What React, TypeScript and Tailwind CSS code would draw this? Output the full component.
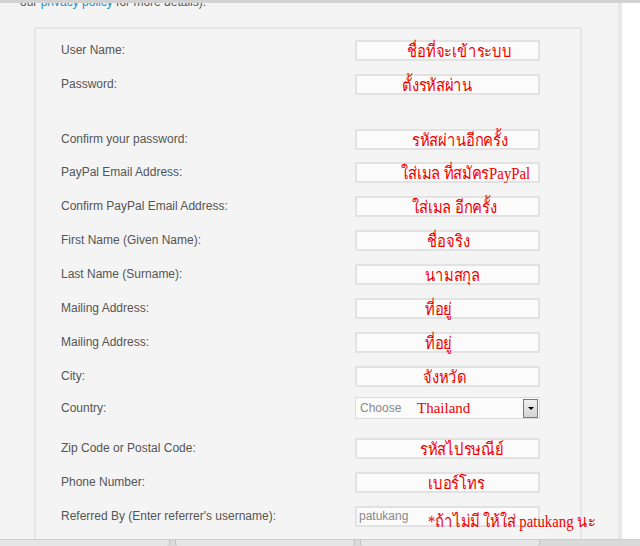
import React from 'react'

type Row = {
  label: string
  note?: string
  left?: number
  kind?: 'input' | 'select' | 'ref'
  h: number
  gapBefore?: number
}

const rows: Row[] = [
  { label: 'User Name:', note: 'ชื่อที่จะเข้าระบบ', left: 52, h: 34 },
  { label: 'Password:', note: 'ตั้งรหัสผ่าน', left: 47, h: 34 },
  { label: 'Confirm your password:', note: 'รหัสผ่านอีกครั้ง', left: 57, h: 32, gapBefore: 22 },
  { label: 'PayPal Email Address:', note: 'ใส่เมล ที่สมัครPayPal', left: 46, h: 34 },
  { label: 'Confirm PayPal Email Address:', note: 'ใส่เมล อีกครั้ง', left: 57, h: 34 },
  { label: 'First Name (Given Name):', note: 'ชื่อจริง', left: 72, h: 34 },
  { label: 'Last Name (Surname):', note: 'นามสกุล', left: 70, h: 34 },
  { label: 'Mailing Address:', note: 'ที่อยู่', left: 70, h: 34 },
  { label: 'Mailing Address:', note: 'ที่อยู่', left: 70, h: 34 },
  { label: 'City:', note: 'จังหวัด', left: 68, h: 34 },
  { label: 'Country:', kind: 'select', h: 30 },
  { label: 'Zip Code or Postal Code:', note: 'รหัสไปรษณีย์', left: 65, h: 34, gapBefore: 8 },
  { label: 'Phone Number:', note: 'เบอร์โทร', left: 73, h: 34 },
  { label: "Referred By (Enter referrer's username):", kind: 'ref', h: 34 },
]

// thai notes were typed over the screenshot in a tall narrow face
const thai = "font-['Liberation_Serif',serif] text-[17px] text-[#f00000] leading-none whitespace-nowrap origin-left scale-x-[0.87]"

function Field({ row }: { row: Row }) {
  if (row.kind === 'select') {
    return (
      <div className="relative w-[185px] h-[22px] border border-[#dcdcdc] bg-[#fbfbfb] flex items-center">
        <span className="pl-[4px] text-[12px] text-[#8a8a8a] font-['Liberation_Sans',sans-serif]">Choose</span>
        <span className="absolute left-[61px] top-[3px] font-['Liberation_Serif',serif] text-[15px] text-[#f00000] leading-none">
          Thailand
        </span>
        <div className="absolute right-[1px] top-[1px] w-[15px] h-[19px] border border-[#7a7a7a] bg-gradient-to-b from-[#f0f0f0] to-[#d4d4d4] flex items-center justify-center">
          <div className="w-0 h-0 border-l-[3px] border-r-[3px] border-t-[3px] border-l-transparent border-r-transparent border-t-black" />
        </div>
      </div>
    )
  }
  if (row.kind === 'ref') {
    return (
      <div className="relative w-[185px] h-[21px] border-2 border-[#e2e2e2] bg-[#fbfbfb] flex items-center">
        <span className="pl-[2px] text-[12px] text-[#8a8a8a] font-['Liberation_Sans',sans-serif]">patukang</span>
        <span className={`absolute left-[71px] top-[5px] ${thai}`}>*ถ้าไม่มี ให้ใส่ patukang นะ</span>
      </div>
    )
  }
  return (
    <div className="relative w-[185px] h-[21px] border-2 border-[#e2e2e2] bg-[#fbfbfb]">
      <span className={`absolute top-[1px] ${thai}`} style={{ left: row.left! - 2 }}>
        {row.note}
      </span>
    </div>
  )
}

export default function App() {
  return (
    <div className="w-[640px] h-[546px] overflow-hidden bg-white flex flex-col font-['Liberation_Sans',Arial,sans-serif]">
      <div className="h-[3px] shrink-0 bg-[#d2d2d2]" />

      <div className="flex-1 flex min-h-0">
        <div className="w-[622px] shrink-0 bg-[#f4f4f4] border-r-4 border-[#e9e9e9] overflow-hidden">
          <p className="-mt-[9px] pl-[20px] text-[12px] leading-[16px] text-[#555]">
            our <span className="text-[#1b8fd2]">privacy policy</span> for more details).
          </p>

          <div className="ml-[34px] mt-[17px] w-[548px] border-2 border-[#e6e6e6] pt-[4px] pb-[20px]">
            {rows.map((r, i) => (
              <div
                key={i}
                className="flex items-center"
                style={{ height: r.h, marginTop: r.gapBefore ?? 0 }}
              >
                <div className="w-[319px] pl-[25px] text-[12px] text-[#555]">{r.label}</div>
                <Field row={r} />
              </div>
            ))}
          </div>
        </div>
        <div className="flex-1 bg-white" />
      </div>

      {/* tab strip at the bottom edge */}
      <div className="h-[7px] shrink-0 bg-[#dadada] border-t border-[#cdcdcd] flex gap-[5px]">
        <div className="w-[170px] bg-[#e6e6e6] border-r border-[#c2c2c2] rounded-br-[3px]" />
        <div className="w-[180px] bg-[#e6e6e6] border-x border-[#c2c2c2] rounded-b-[3px]" />
        <div className="w-[180px] bg-[#e6e6e6] border-x border-[#c2c2c2] rounded-b-[3px]" />
      </div>
    </div>
  )
}
